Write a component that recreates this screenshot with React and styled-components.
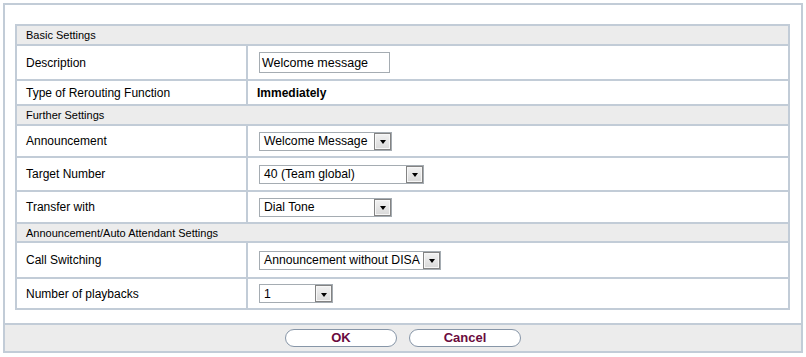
import React from "react";
import styled, { createGlobalStyle } from "styled-components";

const Global = createGlobalStyle`
  html, body { margin: 0; padding: 0; background: #fff; }
  body { font-family: "Liberation Sans", Arial, sans-serif; color: #000; }
`;

const BORDER = "#c2ccd7";

const Frame = styled.div`
  margin: 3px;
  width: 800px;
  box-sizing: border-box;
  border: 2px solid ${BORDER};
  background: #fff;
`;

const Main = styled.div`
  height: 318px;
  box-sizing: border-box;
  padding: 19px 11px 0 10px;
`;

const Table = styled.div`
  display: grid;
  grid-template-columns: 229px 1fr;
  gap: 2px;
  padding: 2px;
  background: ${BORDER};
  width: 775px;
  box-sizing: border-box;
`;

const SectionHead = styled.div`
  grid-column: 1 / span 2;
  height: ${(p) => p.$h}px;
  background: #ececec;
  display: flex;
  align-items: center;
  padding-left: 9px;
  font-size: 11px;
  color: #000;
`;

const LabelCell = styled.div`
  height: ${(p) => p.$h}px;
  background: #fff;
  display: flex;
  align-items: center;
  padding-left: 9px;
  font-size: 12px;
`;

const ValueCell = styled.div`
  height: ${(p) => p.$h}px;
  background: #fff;
  display: flex;
  align-items: center;
  padding-left: ${(p) => (p.$bold ? 9 : 11)}px;
  font-size: 12px;
  font-weight: ${(p) => (p.$bold ? 700 : 400)};
`;

const TextInput = styled.div`
  width: 131px;
  height: 21px;
  box-sizing: border-box;
  border: 1px solid #a5acb2;
  font-size: 12.5px;
  display: flex;
  align-items: center;
  padding-left: 2px;
  background: #fff;
`;

const SelectBox = styled.div`
  width: ${(p) => p.$w}px;
  height: 19px;
  box-sizing: border-box;
  border: 1px solid #a5acb2;
  display: flex;
  align-items: center;
  background: #fff;
`;

const SelectText = styled.span`
  flex: 1;
  padding-left: 4px;
  font-size: 12.2px;
  white-space: nowrap;
`;

const DropButton = styled.span`
  flex: none;
  width: 17px;
  height: 17px;
  box-sizing: border-box;
  border: 1px solid #838383;
  box-shadow: inset 0 0 0 1px #f7f7f7;
  background: linear-gradient(#f2f2f2, #d9d9d9);
  display: flex;
  align-items: center;
  justify-content: center;
  &::after {
    content: "";
    display: block;
    margin-top: 2px;
    border-left: 3.5px solid transparent;
    border-right: 3.5px solid transparent;
    border-top: 4px solid #000;
  }
`;

const Footer = styled.div`
  border-top: 2px solid ${BORDER};
  height: 26px;
  background: #ececec;
  display: flex;
  align-items: center;
  justify-content: center;
  gap: 12px;
`;

const Button = styled.button`
  width: 112px;
  height: 18px;
  box-sizing: border-box;
  border: 1px solid #8796a8;
  border-radius: 9px;
  background: #fff;
  font-family: "Liberation Sans", Arial, sans-serif;
  font-weight: 700;
  font-size: 13px;
  color: #6b0b3e;
  padding: 0;
  line-height: 16px;
  cursor: pointer;
`;

const Select = ({ w, children }) => (
  <SelectBox $w={w}>
    <SelectText>{children}</SelectText>
    <DropButton />
  </SelectBox>
);

export default function App() {
  return (
    <>
      <Global />
      <Frame>
        <Main>
          <Table>
            <SectionHead $h={18}>Basic Settings</SectionHead>
            <LabelCell $h={33}>Description</LabelCell>
            <ValueCell $h={33}>
              <TextInput>Welcome message</TextInput>
            </ValueCell>
            <LabelCell $h={23}>Type of Rerouting Function</LabelCell>
            <ValueCell $h={23} $bold>Immediately</ValueCell>
            <SectionHead $h={18}>Further Settings</SectionHead>
            <LabelCell $h={30}>Announcement</LabelCell>
            <ValueCell $h={30}>
              <Select w={133}>Welcome Message</Select>
            </ValueCell>
            <LabelCell $h={32}>Target Number</LabelCell>
            <ValueCell $h={32}>
              <Select w={165}>40 (Team global)</Select>
            </ValueCell>
            <LabelCell $h={30}>Transfer with</LabelCell>
            <ValueCell $h={30}>
              <Select w={133}>Dial Tone</Select>
            </ValueCell>
            <SectionHead $h={17}>Announcement/Auto Attendant Settings</SectionHead>
            <LabelCell $h={34}>Call Switching</LabelCell>
            <ValueCell $h={34}>
              <Select w={182}>Announcement without DISA</Select>
            </ValueCell>
            <LabelCell $h={29}>Number of playbacks</LabelCell>
            <ValueCell $h={29}>
              <Select w={74}>1</Select>
            </ValueCell>
          </Table>
        </Main>
        <Footer>
          <Button>OK</Button>
          <Button>Cancel</Button>
        </Footer>
      </Frame>
    </>
  );
}
